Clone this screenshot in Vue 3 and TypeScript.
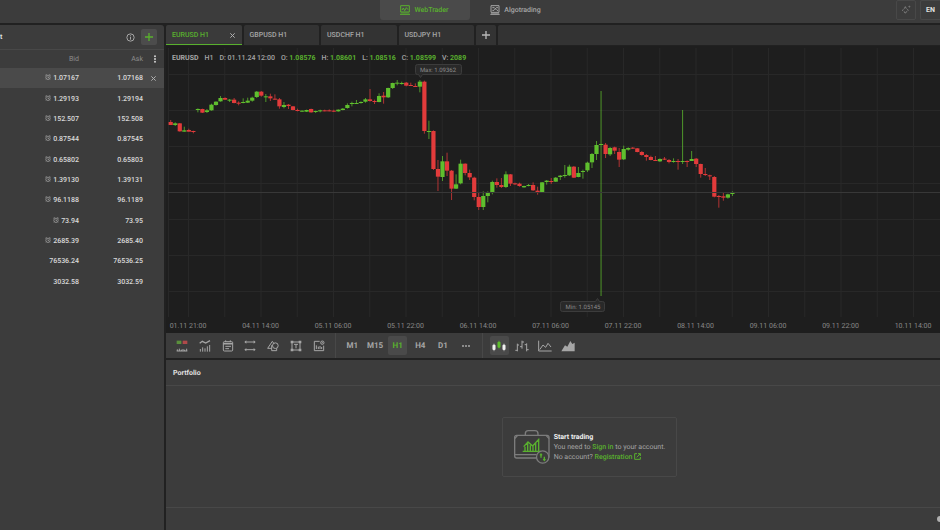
<script setup lang="ts">
import { ref } from 'vue'

interface Quote { bid: string; ask: string; alarm: boolean }
// direction (1 up, 0 down), body top, body bottom, high, low
type Bar = [number, number, number, number, number]

const quotes: Quote[] = [
  { bid: '1.07167', ask: '1.07168', alarm: true },
  { bid: '1.29193', ask: '1.29194', alarm: true },
  { bid: '152.507', ask: '152.508', alarm: true },
  { bid: '0.87544', ask: '0.87545', alarm: true },
  { bid: '0.65802', ask: '0.65803', alarm: true },
  { bid: '1.39130', ask: '1.39131', alarm: true },
  { bid: '96.1188', ask: '96.1189', alarm: true },
  { bid: '73.94', ask: '73.95', alarm: true },
  { bid: '2685.39', ask: '2685.40', alarm: true },
  { bid: '76536.24', ask: '76536.25', alarm: false },
  { bid: '3032.58', ask: '3032.59', alarm: false },
]
const selected = ref(0)

const tabs = ['EURUSD H1', 'GBPUSD H1', 'USDCHF H1', 'USDJPY H1']
const activeTab = ref(0)

const ohlc = [
  { key: 'O:', value: '1.08576' },
  { key: 'H:', value: '1.08601' },
  { key: 'L:', value: '1.08516' },
  { key: 'C:', value: '1.08599' },
  { key: 'V:', value: '2089' },
]

const frames = ['M1', 'M15', 'H1', 'H4', 'D1']
const frame = ref('H1')
const tools = ['trade', 'indicators', 'calendar', 'lines', 'shapes', 'text', 'settings']
const styles = ['candles', 'bars', 'line', 'area']
const chartStyle = ref('candles')

const sessions: { base: number; bars: Bar[] }[] = [
  {
    base: 42,
    bars: [
      [0, 186, 195, 180, 195], [1, 190, 195, 187, 198], [0, 190, 214, 189, 215], [1, 211, 215, 200, 215],
      [0, 210, 215, 206, 215], [0, 213, 215, 212, 220], [1, 147, 150, 145, 157], [0, 147, 158, 146, 159],
      [1, 151, 156, 147, 159], [1, 134, 151, 131, 152], [1, 125, 135, 124, 137], [1, 114, 124, 108, 125],
      [0, 114, 119, 112, 120], [1, 119, 121, 117, 126], [0, 119, 129, 114, 130], [0, 128, 130, 124, 136],
      [1, 126, 129, 115, 130], [1, 122, 128, 113, 129], [1, 113, 122, 110, 125], [1, 95, 111, 93, 114],
      [0, 95, 107, 93, 110], [1, 109, 111, 102, 126], [0, 109, 115, 101, 123], [0, 116, 118, 103, 119],
      [0, 118, 139, 114, 146], [1, 135, 141, 126, 145], [0, 134, 138, 132, 147], [0, 139, 150, 138, 151],
      [0, 150, 153, 146, 154], [1, 152, 155, 151, 156], [1, 150, 155, 149, 156], [0, 147, 157, 146, 158],
      [1, 153, 155, 152, 159], [1, 151, 153, 149, 157], [0, 151, 153, 149, 154], [0, 151, 153, 148, 154],
      [0, 152, 155, 149, 156], [1, 149, 154, 148, 155], [1, 146, 150, 144, 151], [1, 135, 144, 130, 146],
      [1, 129, 132, 125, 139], [1, 129, 131, 120, 131], [1, 126, 129, 124, 131], [1, 118, 125, 114, 128],
      [0, 118, 123, 87, 125], [0, 123, 126, 119, 132], [1, 108, 126, 100, 127], [0, 107, 112, 96, 131],
      [1, 84, 112, 83, 114], [1, 69, 84, 68, 87], [1, 68, 70, 60, 76], [1, 69, 71, 65, 74],
      [0, 68, 77, 66, 79], [0, 75, 77, 68, 78], [0, 78, 80, 70, 81], [1, 65, 80, 60, 97],
      [0, 65, 213, 62, 221], [1, 213, 215, 182, 237], [0, 213, 327, 211, 330], [0, 327, 350, 300, 393],
      [1, 304, 351, 288, 363], [0, 304, 332, 278, 348], [0, 332, 386, 330, 420], [1, 373, 386, 343, 387],
      [1, 311, 370, 299, 373], [0, 311, 339, 310, 346], [0, 339, 352, 329, 360], [0, 353, 411, 350, 421],
      [0, 411, 441, 396, 450], [1, 408, 441, 394, 450], [1, 399, 408, 394, 427], [1, 366, 399, 362, 403],
      [0, 366, 375, 355, 383], [0, 375, 381, 354, 384], [1, 343, 381, 334, 384], [0, 343, 371, 342, 378],
      [0, 370, 372, 368, 375], [0, 371, 378, 368, 380], [1, 378, 382, 377, 383], [1, 375, 377, 372, 379],
      [0, 375, 391, 367, 393], [0, 392, 396, 380, 404], [1, 367, 396, 366, 397],
    ],
  },
  {
    base: 102,
    bars: [
      [1, 302, 306, 300, 314], [0, 303, 305, 294, 312], [1, 293, 305, 291, 306], [1, 287, 291, 285, 300],
      [1, 285, 288, 255, 293], [1, 260, 286, 254, 288], [0, 260, 293, 258, 294], [1, 279, 291, 261, 292],
      [1, 273, 276, 269, 296], [1, 248, 271, 245, 276], [1, 222, 247, 219, 264], [1, 195, 222, 183, 240],
      [1, 192, 195, 33, 648], [0, 194, 222, 189, 234], [1, 204, 223, 201, 228], [0, 202, 212, 200, 222],
      [0, 216, 239, 204, 261], [1, 207, 238, 197, 240], [1, 204, 209, 202, 212], [0, 203, 205, 201, 207],
      [0, 205, 216, 204, 217], [0, 216, 225, 213, 227], [0, 225, 231, 222, 242], [0, 231, 240, 227, 241],
      [0, 240, 243, 228, 243], [1, 237, 244, 235, 246], [0, 236, 238, 231, 240], [0, 240, 246, 237, 250],
      [1, 243, 245, 235, 248], [0, 243, 245, 237, 269], [1, 243, 245, 90, 252], [0, 243, 245, 241, 261],
      [1, 237, 243, 213, 243], [0, 236, 252, 234, 261], [0, 252, 282, 251, 293], [0, 282, 284, 264, 288],
      [0, 286, 288, 284, 300], [0, 291, 350, 288, 352], [0, 348, 350, 345, 383], [0, 349, 353, 337, 362],
      [1, 343, 353, 341, 356], [1, 339, 342, 334, 348],
    ],
  },
]

const STEP = 4.53
const candles = sessions
  .flatMap(s => s.bars.map(([up, top, bottom, high, low]) => ({
    up: up === 1,
    top: (top + s.base) / 3,
    height: Math.max(1, (bottom - top) / 3),
    high: (high + s.base) / 3,
    low: (low + s.base) / 3,
  })))
  .map((c, i) => ({ ...c, x: 4.7 + i * STEP }))

const columns = Array.from({ length: 60 }, (_, i) => 22.5 + i * 36.25)
const rows = Array.from({ length: 7 }, (_, i) => 28.5 + Math.round(i * 36.2))
const dates = ['01.11 21:00', '04.11 14:00', '05.11 06:00', '05.11 22:00', '06.11 14:00', '07.11 06:00',
  '07.11 22:00', '08.11 14:00', '09.11 06:00', '09.11 22:00', '10.11 14:00']
</script>

<template>
  <div class="app">
    <header class="top">
      <span></span>
      <nav class="modes">
        <a href="#web" class="mode active">
          <svg class="i10" viewBox="0 0 30 30" fill="none" stroke="currentColor" stroke-width="3">
            <path d="M2 2h26v19H2zM0 28h30M6 15l4-6 4 8 5-9 5 6" /><path d="M2 24h26" stroke-width="2" />
          </svg>
          WebTrader
        </a>
        <a href="#algo" class="mode">
          <svg class="i10" viewBox="0 0 30 30" fill="none" stroke="currentColor" stroke-width="3">
            <path d="M3 2h24v20H3zM1 28h28M7 8h6l8 8h3M7 16h5l7-8h5" /><path d="M3 25h24" stroke-width="2" />
          </svg>
          Algotrading
        </a>
      </nav>
      <div class="corner">
        <button class="square" aria-label="Theme">
          <svg class="i10" viewBox="0 0 30 30" fill="none" stroke="currentColor" stroke-width="3">
            <path d="M13 5l3 6 6 5-6 4-3 6-3-6-6-4 6-5z" stroke-dasharray="7 3" /><circle cx="25" cy="5" r="1.5" />
          </svg>
        </button>
        <button class="square lang">EN</button>
      </div>
    </header>

    <div class="body">
      <aside class="market">
        <div class="market-head">
          <span class="title">t</span>
          <span class="fill"></span>
          <svg class="info" viewBox="0 0 27 27" fill="none" stroke="currentColor" stroke-width="3">
            <circle cx="13.5" cy="13.5" r="11" /><path d="M13.5 12v8M13.5 7v3" />
          </svg>
          <button class="add" aria-label="Add symbol">
            <svg class="i8" viewBox="0 0 24 24" fill="none" stroke="currentColor" stroke-width="4"><path d="M12 0v24M0 12h24" /></svg>
          </button>
        </div>
        <table class="quotes">
          <thead>
            <tr>
              <th class="bid">Bid</th>
              <th class="ask">Ask</th>
              <th class="act">
                <svg class="dots" viewBox="0 0 6 24" fill="currentColor">
                  <circle cx="3" cy="4" r="3" /><circle cx="3" cy="12" r="3" /><circle cx="3" cy="20" r="3" />
                </svg>
              </th>
            </tr>
          </thead>
          <tbody>
            <tr v-for="(q, i) in quotes" :key="q.bid" :class="{ selected: i === selected }" @click="selected = i">
              <td class="bid">
                <svg v-if="q.alarm" class="alarm" viewBox="0 0 18 18" fill="none" stroke="currentColor" stroke-width="2">
                  <circle cx="9" cy="10" r="6.5" /><path d="M1 4l4-3M17 4l-4-3M9 7v4h3M4 15l-2 2M14 15l2 2" />
                </svg>
                {{ q.bid }}
              </td>
              <td class="ask">{{ q.ask }}</td>
              <td class="act">
                <button v-if="i === selected" class="plain" aria-label="Remove">
                  <svg class="i5" viewBox="0 0 15 15" fill="none" stroke="currentColor" stroke-width="3"><path d="M1 1l13 13M14 1L1 14" /></svg>
                </button>
              </td>
            </tr>
          </tbody>
        </table>
      </aside>

      <main class="work">
        <div class="tabs">
          <div class="tab-list">
            <button v-for="(t, i) in tabs" :key="t" class="tab" :class="{ active: i === activeTab }" @click="activeTab = i">
              {{ t }}
              <svg v-if="i === activeTab" class="i5" viewBox="0 0 15 15" fill="none" stroke="currentColor" stroke-width="3"><path d="M1 1l13 13M14 1L1 14" /></svg>
            </button>
          </div>
          <button class="tab new" aria-label="New chart">
            <svg class="i8" viewBox="0 0 24 24" fill="none" stroke="currentColor" stroke-width="4"><path d="M12 0v24M0 12h24" /></svg>
          </button>
          <span class="tab-rest"></span>
        </div>

        <section class="chart">
          <svg class="plot">
            <g class="grid">
              <line x1="2.5" x2="2.5" y1="2" y2="271" />
              <line v-for="x in columns" :key="x" :x1="x" :x2="x" y1="2" y2="271" />
              <line v-for="y in rows" :key="y" x1="2" x2="100%" :y1="y" :y2="y" />
            </g>
            <g v-for="c in candles" :key="c.x" :class="c.up ? 'up' : 'down'">
              <rect class="wick" :x="c.x - 0.5" :y="c.high" width="1" :height="c.low - c.high" />
              <rect :x="c.x - 2.1" :y="c.top" width="4.2" :height="c.height" />
            </g>
            <line class="price" x1="2" x2="100%" y1="146.5" y2="146.5" />
            <g class="flag">
              <path d="M251.500 18.500h42a2 2 0 0 1 2 2v6a2 2 0 0 1-2 2h-37l-2 3-2-3h-1a2 2 0 0 1-2-2v-6a2 2 0 0 1 2-2z" />
              <text x="272" y="26">Max: 1.09362</text>
              <path d="M396.500 255.500h33l2-3 2 3h3a2 2 0 0 1 2 2v6a2 2 0 0 1-2 2h-40a2 2 0 0 1-2-2v-6a2 2 0 0 1 2-2z" />
              <text x="417" y="263">Min: 1.05145</text>
            </g>
            <g class="dates">
              <text v-for="(d, i) in dates" :key="d" :x="22 + i * 72.5" y="282">{{ d }}</text>
            </g>
          </svg>
          <div class="legend">
            <b>EURUSD</b><span>H1</span><span>D: 01.11.24 12:00</span>
            <span v-for="o in ohlc" :key="o.key">{{ o.key }} <em>{{ o.value }}</em></span>
          </div>
        </section>

        <div class="toolbar">
          <div class="group seven">
            <button v-for="t in tools" :key="t" class="tool" :aria-label="t">
              <svg class="i12" viewBox="0 0 36 36" fill="none" stroke="currentColor" stroke-width="3">
                <template v-if="t === 'trade'">
                  <rect x="2" y="2" width="14" height="10" class="buy" /><rect x="20" y="2" width="14" height="10" class="sell" />
                  <path d="M2 33h32M4 28v5M10 26v7M16 29v4M21 27v6M26 29v4M32 26v7" />
                </template>
                <template v-else-if="t === 'indicators'">
                  <path d="M2 10l8-6 10 5 13-7" stroke-width="4" /><path d="M4 27v8M11 22v13M18 25v10M25 19v16M32 15v20" />
                </template>
                <template v-else-if="t === 'calendar'">
                  <rect x="4" y="5" width="28" height="28" rx="3" /><path d="M4 11h28" stroke-width="5" /><path d="M11 1v5M25 1v5M10 19h17M10 26h11" />
                </template>
                <template v-else-if="t === 'lines'">
                  <path d="M5 6h26M5 29h26" /><path d="M1 6l6-5v10zM35 6l-6-5v10zM1 29l6-5v10zM35 29l-6-5v10z" class="solid" />
                </template>
                <template v-else-if="t === 'shapes'">
                  <path d="M16 4L2 25h12M16 4l5 7" /><circle cx="25" cy="17" r="8.500" /><path d="M14 16v16h15v-7M14 17h3" />
                </template>
                <template v-else-if="t === 'text'">
                  <path d="M6 6h24v24H6zM12 13h12M18 13v12" /><path d="M2 2h8v8H2zM26 2h8v8h-8zM2 26h8v8H2zM26 26h8v8h-8z" class="solid" />
                </template>
                <template v-else>
                  <path d="M20 4H4v28h28V17M10 27V16M16 27v-7M21 27v-9M26 27v-6" /><circle cx="28" cy="8" r="5" /><circle cx="28" cy="8" r="1" />
                </template>
              </svg>
            </button>
          </div>
          <span class="sep"></span>
          <div class="group six">
            <button v-for="f in frames" :key="f" class="tool" :class="{ on: f === frame }" @click="frame = f">{{ f }}</button>
            <button class="tool" aria-label="More timeframes">
              <svg class="i8" viewBox="0 0 24 24" fill="currentColor">
                <circle cx="3" cy="12" r="3" /><circle cx="12" cy="12" r="3" /><circle cx="21" cy="12" r="3" />
              </svg>
            </button>
          </div>
          <span class="sep"></span>
          <div class="group four">
            <button v-for="s in styles" :key="s" class="tool" :class="{ on: s === chartStyle }" :aria-label="s" @click="chartStyle = s">
              <svg class="wide" viewBox="0 0 42 36" fill="none" stroke="currentColor" stroke-width="3">
                <template v-if="s === 'candles'">
                  <g class="white"><rect x="2" y="14" width="8" height="16" rx="3" /><path d="M6 10v24M36 10v24" /><rect x="32" y="14" width="8" height="16" rx="3" /></g>
                  <g class="lime"><rect x="17" y="5" width="8" height="18" rx="3" /><path d="M21 1v27" /></g>
                </template>
                <path v-else-if="s === 'bars'" d="M7 11v23M1 31h6M7 15h5M21 2v24M15 20h6M21 6h6M35 10v24M29 14h6M35 29h6" />
                <path v-else-if="s === 'line'" d="M2 2v31h39M5 29l10-14 8 7 7-12 9 11" />
                <path v-else class="solid" d="M1 34l11-18 7 4 9-17 6 9 7-4v26z" />
              </svg>
            </button>
          </div>
        </div>

        <section class="portfolio">
          <h2>Portfolio</h2>
          <div class="stage">
            <div class="promo">
              <svg class="case" viewBox="0 0 108 102" fill="none" stroke="#7c7c7c" stroke-width="4">
                <rect x="2" y="16" width="103" height="68" rx="6" />
                <path d="M34 15v-4a9 9 0 0 1 9-9h20a9 9 0 0 1 9 9v4M2 26l9-10M105 26l-9-10M2 74h66" />
                <g stroke="#59b02e">
                  <path d="M26 64h54M33 64V50M41 64V40M49 64V46M57 64V49M65 64V38M74 64V30M29 50l13-14 14 12 20-22" />
                </g>
                <circle cx="86" cy="81" r="18.500" fill="#3c3c3c" />
                <path d="M81 74v9M78 76l3-4 3 4M91 80v10M88 87l3 4 3-4" stroke="#59b02e" />
              </svg>
              <div class="copy">
                <strong>Start trading</strong>
                <p>You need to <a href="#signin">Sign in</a> to your account.</p>
                <p>No account? <a href="#register">Registration
                  <svg class="ext" viewBox="0 0 21 21" fill="none" stroke="currentColor" stroke-width="3"><path d="M9 2H2v17h17v-7M12 2h7v7M19 2L8 13" /></svg></a></p>
              </div>
            </div>
          </div>
          <footer><span class="knob"></span></footer>
        </section>
      </main>
    </div>
  </div>
</template>

<style>
body { background: #212121; overflow: hidden; }
</style>

<style scoped>
* { box-sizing: border-box; }
.app {
  display: flex; flex-direction: column; height: 100vh; overflow: hidden;
  font-family: Roboto, "Liberation Sans", sans-serif; font-size: 7px; line-height: 10px; color: #a6a6a6;
  background: #212121; text-rendering: geometricPrecision;
}
button { font: inherit; color: inherit; border: 0; padding: 0; margin: 0; background: none; display: flex; align-items: center; justify-content: center; text-rendering: inherit; }
a { color: #59b02e; text-decoration: none; font-weight: 500; }
svg { flex: none; }
.i5 { width: 5px; height: 5px; }
.i8 { width: 8px; height: 8px; }
.i10 { width: 10px; height: 10px; }
.i12 { width: 12px; height: 12px; }
.wide { width: 14px; height: 12px; }
.solid { fill: currentColor; stroke: none; }

.top { display: grid; grid-template-columns: 1fr auto 1fr; height: 23px; background: #3c3c3c; }
.modes { display: grid; grid-template-columns: 90px 90px; gap: 1px; height: 20px; }
.mode { display: flex; align-items: center; justify-content: center; gap: 4px; color: #a6a6a6; border-radius: 0 0 3px 3px; }
.mode.active { background: #4a4a4a; color: #59b02e; }
.corner { display: flex; justify-content: flex-end; gap: 4px; height: 20px; }
.square { width: 20px; border: 1px solid #484848; border-radius: 2px; color: #808080; }
.lang { border-right: 0; border-radius: 2px 0 0 2px; color: #e0e0e0; font-weight: 700; }

.body { flex: 1; display: flex; gap: 2px; padding-top: 2px; min-height: 0; }
.market { width: 164px; flex: none; background: #3c3c3c; border-radius: 0 3px 0 0; }
.market-head { display: flex; align-items: center; height: 25px; padding-right: 7px; border-bottom: 1px solid #484848; }
.title { color: #e0e0e0; font-weight: 700; }
.fill { flex: 1; }
.info { width: 9px; height: 9px; margin-right: 6px; }
.add { width: 16px; height: 16px; border-radius: 2px; background: #4c4c4c; color: #59b02e; }
.quotes { width: 100%; height: 242px; border-collapse: collapse; table-layout: fixed; color: #dadada; }
th { height: 18px; font-weight: 400; color: #8c8c8c; }
th, td { padding: 0; text-align: right; vertical-align: middle; }
td { font-weight: 500; }
.bid { width: 79px; }
.ask { width: 64px; }
.act { text-align: center; color: #b0b0b0; }
.act .plain { margin: 0 auto; }
.selected { background: #4a4a4a; }
.alarm { width: 6px; height: 6px; color: #b0b0b0; }
.dots { width: 2px; height: 8px; margin-left: 3px; color: #d0d0d0; vertical-align: middle; }

.work { flex: 1; min-width: 0; display: flex; flex-direction: column; }
.tabs { display: flex; gap: 2px; height: 20px; }
.tab-list { display: grid; grid-template-columns: repeat(4, 1fr); gap: 2px; width: 308px; }
.tab { padding: 0 7px 0 6px; justify-content: space-between; background: #333; border-radius: 2px 2px 0 0; font-weight: 500; }
.tab.active { background: #3a3a3a; color: #59b02e; box-shadow: inset 0 -1px #59b02e; }
.tab.active svg { color: #b0b0b0; }
.tab.new { width: 20px; padding: 0; justify-content: center; color: #b8b8b8; }
.tab-rest { flex: 1; background: #333; border-radius: 2px 0 0 0; }

.chart { position: relative; height: 287px; margin-top: 1px; background: #1e1e1e; flex: none; }
.plot { display: block; width: 100%; height: 100%; }
.grid line { stroke: #282828; }
.price { stroke: #383838; }
.up { fill: #5fbf2e; }
.down { fill: #e23b3b; }
.wick { opacity: 0.75; }
.flag path { fill: #292929; stroke: #3c3c3c; }
.flag text { fill: #8a8a8a; font-size: 6px; text-anchor: middle; }
.dates text { fill: #8a8a8a; text-anchor: middle; }
.legend { position: absolute; left: 6px; top: 7px; display: flex; gap: 6px; white-space: nowrap; font-weight: 500; }
.legend b { font-weight: 700; }
.legend em { font-style: normal; font-weight: 700; color: #59b02e; }

.toolbar { display: flex; align-items: center; height: 25px; padding-left: 5px; background: #3c3c3c; flex: none; }
.group { display: grid; justify-items: center; }
.seven { width: 159px; grid-template-columns: repeat(7, 1fr); }
.six { width: 136px; grid-template-columns: repeat(6, 1fr); }
.four { width: 91px; grid-template-columns: repeat(4, 1fr); }
.sep { width: 1px; height: 25px; background: #484848; margin: 0 5px; }
.tool { width: 19px; height: 19px; border-radius: 2px; font-size: 8px; font-weight: 700; }
.tool.on { background: #4a4a4a; color: #59b02e; }
.buy { fill: #5a8f3c; stroke: none; }
.sell { fill: #b04a4a; stroke: none; }
.white { fill: #f0f0f0; stroke: #f0f0f0; stroke-width: 1; }
.lime { fill: #5fc02e; stroke: #5fc02e; stroke-width: 1; }

.portfolio { flex: 1; display: flex; flex-direction: column; margin-top: 2px; background: #3c3c3c; min-height: 0; }
h2 { margin: 0; height: 26px; padding: 8px 7px; font-size: 7px; line-height: 10px; font-weight: 700; color: #e0e0e0; border-bottom: 1px solid #484848; }
.stage { flex: 1; display: flex; align-items: center; justify-content: center; padding-left: 73px; }
.promo { display: flex; align-items: center; gap: 4px; padding: 12px 11px; border: 1px solid #484848; border-radius: 2px; }
.case { width: 36px; height: 34px; }
.copy strong { display: block; color: #f0f0f0; font-weight: 700; }
.copy p { margin: 0; white-space: nowrap; }
.ext { width: 7px; height: 7px; vertical-align: -1px; }
footer { height: 23px; border-top: 1px solid #484848; display: flex; align-items: center; justify-content: flex-end; overflow: hidden; }
.knob { width: 3px; height: 6px; border-radius: 3px 0 0 3px; background: #b0b0b0; }
</style>
